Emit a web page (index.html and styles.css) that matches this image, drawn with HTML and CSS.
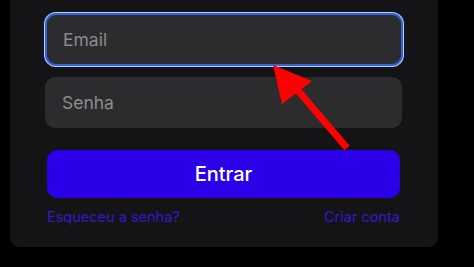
FILE: index.html
```html
<!DOCTYPE html>
<html lang="pt">
<head>
<meta charset="utf-8">
<link rel="stylesheet" href="styles.css">
</head>
<body>
<div class="card">
  <div class="field field-focus"><span class="ph">Email</span></div>
  <div class="field"><span class="ph">Senha</span></div>
  <button class="btn">Entrar</button>
  <div class="links">
    <a class="link">Esqueceu a senha?</a>
    <a class="link">Criar conta</a>
  </div>
  <svg class="arrow" width="120" height="110" viewBox="0 0 120 110">
    <line x1="33" y1="33" x2="85" y2="94" stroke="#ff0000" stroke-width="7"/>
    <polygon points="11,11 50,27 20,50" fill="#ff0000"/>
  </svg>
</div>
</body>
</html>
```
FILE: styles.css
```css
html, body {
  margin: 0;
  padding: 0;
  background: #000;
  width: 474px;
  height: 267px;
  overflow: hidden;
  font-family: "Inter", "Liberation Sans", sans-serif;
}
.card {
  position: relative;
  margin-left: 10px;
  width: 428px;
  height: 247px;
  box-sizing: border-box;
  background: #141416;
  border-radius: 0 0 9px 9px;
  padding: 13px 35px 0 35px;
  display: flex;
  flex-direction: column;
}
.field {
  height: 51px;
  box-sizing: border-box;
  background: #2c2c2e;
  border-radius: 10px;
  display: flex;
  align-items: center;
  padding-left: 17px;
  margin-right: 1px;
}
.field-focus {
  height: 53px;
  margin-right: 0;
  margin-bottom: 11px;
  border: 2px solid #2f64d8;
  box-shadow: 0 0 0 1px #b8ceff;
  padding-left: 16px;
  border-radius: 11px;
}
.ph {
  color: #8b8b90;
  font-size: 17.5px;
}
.btn {
  margin: 22px 3px 0 2px;
  height: 48px;
  border: none;
  border-radius: 10px;
  background: #2b00e8;
  color: #fff;
  font-family: "Inter", "Liberation Sans", sans-serif;
  font-size: 20px;
  font-weight: 500;
  padding: 0;
}
.links {
  display: flex;
  justify-content: space-between;
  margin: 10px 3px 0 2px;
}
.link {
  color: #3418c8;
  font-size: 14.5px;
  line-height: 18px;
}
.arrow {
  position: absolute;
  left: 252px;
  top: 54px;
}
```
